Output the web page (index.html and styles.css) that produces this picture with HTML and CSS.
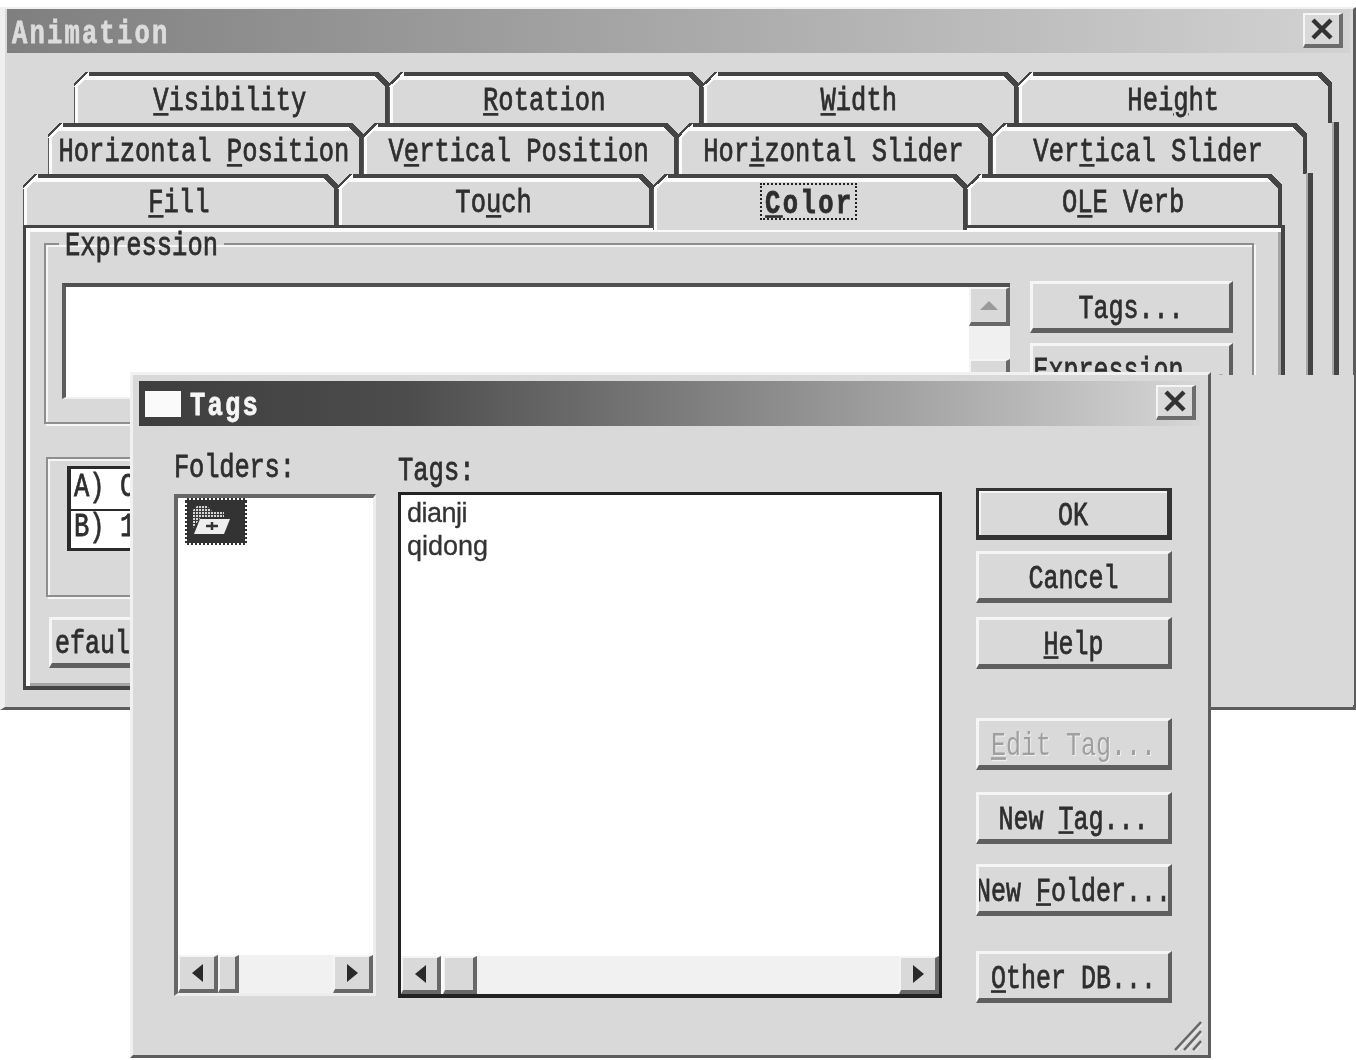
FILE: index.html
```html
<!DOCTYPE html>
<html lang="en">
<head>
<meta charset="utf-8">
<title>Animation</title>
<link rel="stylesheet" href="styles.css">
</head>
<body>
<div class="win win-main">
  <div class="titlebar titlebar-main">
    <span class="title-text title-main"><span class="t">Animation</span></span>
    <button class="close close-main"><svg width="24" height="24" viewBox="0 0 24 24"><path d="M3 3 21 21M21 3 3 21" stroke="#333" stroke-width="4.5"/></svg></button>
  </div>
  <div class="tabs">
    <div class="tabrow row1">
      <div class="tab"><span class="t"><u>V</u>isibility</span></div>
      <div class="tab"><span class="t"><u>R</u>otation</span></div>
      <div class="tab"><span class="t"><u>W</u>idth</span></div>
      <div class="tab"><span class="t">Hei<u>g</u>ht</span></div>
    </div>
    <div class="tabrow row2">
      <div class="tab"><span class="t">Horizontal <u>P</u>osition</span></div>
      <div class="tab"><span class="t">V<u>e</u>rtical Position</span></div>
      <div class="tab"><span class="t">Hor<u>i</u>zontal Slider</span></div>
      <div class="tab"><span class="t">Ver<u>t</u>ical Slider</span></div>
    </div>
    <div class="tabrow row3">
      <div class="tab"><span class="t"><u>F</u>ill</span></div>
      <div class="tab"><span class="t">To<u>u</u>ch</span></div>
      <div class="tab tab-active"><span class="focus"><span class="t"><u>C</u>olor</span></span></div>
      <div class="tab"><span class="t">O<u>L</u>E Verb</span></div>
    </div>
  </div>
  <div class="panel">
    <fieldset class="group group-expr">
      <legend class="legend"><span class="t">Expression</span></legend>
      <div class="expr-row">
        <div class="textarea">
          <div class="vscroll">
            <div class="sbtn sbtn-up"><span class="arrow-up"></span></div>
            <div class="vtrack"></div>
            <div class="sbtn sbtn-low"></div>
          </div>
        </div>
        <div class="expr-btns">
          <button class="btn btn-expr"><span class="t">Tags...</span></button>
          <button class="btn btn-expr"><span class="t">Expression...</span></button>
        </div>
      </div>
    </fieldset>
    <fieldset class="group group-list">
      <div class="abc">
        <div class="abc-row"><span class="t">A) C</span></div>
        <div class="abc-row"><span class="t">B) 1</span></div>
      </div>
    </fieldset>
    <button class="btn btn-default"><span class="t">efault</span></button>
  </div>
  <div class="edge edge1"></div>
  <div class="edge edge2"></div>
  <div class="cover"></div>
</div>

<div class="win win-tags">
  <div class="titlebar titlebar-tags">
    <span class="tag-icon"></span>
    <span class="title-text title-tags"><span class="t">Tags</span></span>
    <button class="close close-tags"><svg width="24" height="24" viewBox="0 0 24 24"><path d="M3 3 21 21M21 3 3 21" stroke="#333" stroke-width="4.5"/></svg></button>
  </div>
  <div class="tags-body">
    <div class="col col-folders">
      <div class="lab lab-folders"><span class="t">Folders:</span></div>
      <div class="list list-folders">
        <div class="list-main">
          <div class="folder-item">
            <svg width="58" height="43" viewBox="0 0 58 43">
              <defs><pattern id="dith" width="3" height="3" patternUnits="userSpaceOnUse"><rect width="3" height="3" fill="#3c3c3c"/><rect width="2" height="2" fill="#d6d6d6"/></pattern></defs>
              <path d="M6 10 10 6H20L26 12H37V17H14L6 28Z" fill="url(#dith)"/>
              <path d="M13 19H43L37 34H7Z" fill="#eee"/>
              <path d="M19 26H31M25 22V30" stroke="#333" stroke-width="2.5"/>
            </svg>
          </div>
        </div>
        <div class="hscroll">
          <div class="sbtn sbtn-h"><span class="arrow-left"></span></div>
          <div class="sbtn thumb-folders"></div>
          <div class="htrack"></div>
          <div class="sbtn sbtn-h"><span class="arrow-right"></span></div>
        </div>
      </div>
    </div>
    <div class="col col-tags">
      <div class="lab lab-tags"><span class="t">Tags:</span></div>
      <div class="list list-tags">
        <div class="list-main tag-items">
          <div class="tag-item">dianji</div>
          <div class="tag-item">qidong</div>
        </div>
        <div class="hscroll">
          <div class="sbtn sbtn-h"><span class="arrow-left"></span></div>
          <div class="sbtn thumb-tags"></div>
          <div class="htrack"></div>
          <div class="sbtn sbtn-h"><span class="arrow-right"></span></div>
        </div>
      </div>
    </div>
    <div class="col col-btns">
      <button class="btn btn-tag btn-ok"><span class="t">OK</span></button>
      <button class="btn btn-tag gap11"><span class="t">Cancel</span></button>
      <button class="btn btn-tag gap14"><span class="t"><u>H</u>elp</span></button>
      <button class="btn btn-tag gap49 btn-disabled"><span class="t"><u>E</u>dit Tag...</span></button>
      <button class="btn btn-tag gap22"><span class="t">New <u>T</u>ag...</span></button>
      <button class="btn btn-tag gap20"><span class="t">New <u>F</u>older...</span></button>
      <button class="btn btn-tag gap35"><span class="t"><u>O</u>ther DB...</span></button>
    </div>
  </div>
  <svg class="grip" width="30" height="32" viewBox="0 0 30 32"><path d="M2 30 28 2M11 30 28 11M20 30 28 21" stroke="#666" stroke-width="2.5"/><path d="M5 31 29 5M14 31 29 14M23 31 29 24" stroke="#f4f4f4" stroke-width="1"/></svg>
</div>
</body>
</html>
```
FILE: styles.css
```css
* { box-sizing: border-box; }
html, body { margin: 0; background: #fff; }
body {
  position: relative;
  width: 1356px;
  height: 1060px;
  overflow: hidden;
  font-family: "Liberation Mono", monospace;
  font-size: 25.5px;
  color: #2e2e2e;
  filter: blur(0.65px);
}
.t { display: inline-block; transform: translateY(2.5px) scaleY(1.32); -webkit-text-stroke: 0.6px #2e2e2e; white-space: pre; }
u { text-decoration-thickness: 2px; text-underline-offset: 2px; }

.win { position: absolute; background: #d9d9d9; }
.win-main {
  left: 0; top: 7px; width: 1356px; height: 703px;
  border-top: 2px solid #f1f1f1;
  border-left: 5px solid #efefef;
  border-right: 3px solid #5c5c5c;
  border-bottom: 3px solid #5c5c5c;
  padding: 0 3px 0 2px;
}
.win-tags {
  left: 130px; top: 372px; width: 1081px; height: 686px;
  border-top: 3px solid #f1f1f1;
  border-left: 3px solid #f1f1f1;
  border-right: 3px solid #5c5c5c;
  border-bottom: 3px solid #5c5c5c;
  padding: 6px 8px 0 6px;
}

.titlebar { display: flex; align-items: center; height: 45px; }
.titlebar-main { height: 44px; background: linear-gradient(90deg, #7f7f7f, #d2d2d2); padding: 0 7px 0 5px; }
.titlebar-tags { background: linear-gradient(90deg, #3e3e3e 0, #4c4c4c 25%, #d6d6d6 100%); padding: 0 4px 0 6px; }
.title-text { font-weight: bold; letter-spacing: 2.2px; }
.title-main { color: #dcdcdc; }
.title-main .t { -webkit-text-stroke: 0.6px #dcdcdc; }
.title-tags { color: #f6f6f6; margin-left: 9px; }
.title-tags .t { -webkit-text-stroke: 0.6px #f6f6f6; }
.tag-icon { width: 36px; height: 26px; background: #fafafa; }
.close {
  margin-left: auto; margin-top: -2px; width: 40px; height: 35px; padding: 0;
  display: flex; align-items: center; justify-content: center;
  background: #d9d9d9;
  border-style: solid; border-width: 2px 4px 4px 2px;
  border-color: #f5f5f5 #6c6c6c #6c6c6c #f5f5f5;
}
.close-tags { margin-top: -3px; }

.tabs { margin-top: 19px; }
.tabrow { display: flex; height: 51px; }
.row1 { padding-left: 67px; width: 1325px; }
.row2 { padding-left: 41px; width: 1300px; }
.row3 { padding-left: 16px; width: 1275px; position: relative; z-index: 2; }
.tab {
  position: relative; flex: 1 1 0; min-width: 0;
  background: #d9d9d9;
  border-top: 4px solid #444;
  border-left: 1px solid #5a5a5a;
  border-right: 4px solid #444;
  box-shadow: inset 3px 4px 0 #fbfbfb;
  text-align: center; line-height: 48px;
  white-space: nowrap;
}
.tab::before, .tab::after { content: ""; position: absolute; top: -4px; width: 15px; height: 15px; }
.tab::before { left: -1px; background: linear-gradient(135deg, #d9d9d9 0 38%, #444 38% 50%, #fbfbfb 50% 62%, transparent 62%); }
.tab::after { right: -4px; background: linear-gradient(225deg, #d9d9d9 0 36%, #444 36% 62%, transparent 62%); }
.tab-active { height: 56px; font-weight: bold; letter-spacing: 2.4px; line-height: 31px; padding-top: 7px; z-index: 2; }
.focus { display: inline-block; outline: 2px dotted #222; padding: 0 1px 0 3px; line-height: 33px; }

.panel {
  margin-left: 16px; width: 1262px; height: 465px;
  border-top: 3px solid #444;
  border-left: 3px solid #444;
  border-right: 4px solid #444;
  border-bottom: 4px solid #444;
  box-shadow: inset 4px 4px 0 #fbfbfb, inset -3px -3px 0 #a4a4a4;
  padding: 1px 0 0 18px;
}
.group {
  margin: 0; min-width: 0; width: 1210px;
  border: 2px solid #8e8e8e;
  box-shadow: inset 2px 2px 0 #f6f6f6, 2px 2px 0 #f6f6f6;
}
.group-expr { padding: 24px 19px 23px 16px; }
.legend { margin-left: -3px; padding: 0 6px; line-height: 30px; height: 30px; }
.legend .t { transform: translateY(3.5px) scaleY(1.32); }
.expr-row { display: flex; gap: 20px; height: 116px; }
.textarea {
  width: 949px; height: 116px; background: #fff; display: flex; justify-content: flex-end;
  border-top: 4px solid #505050; border-left: 4px solid #5c5c5c;
  border-bottom: 2px solid #f1f1f1;
}
.vscroll { width: 41px; display: flex; flex-direction: column; }
.sbtn {
  background: #d9d9d9; display: flex; align-items: center; justify-content: center;
  border-style: solid; border-width: 2px 4px 4px 2px;
  border-color: #f5f5f5 #686868 #686868 #f5f5f5;
}
.sbtn-up { height: 39px; flex: none; }
.vtrack { flex: none; height: 33px; background: #f0f0f0; }
.sbtn-low { height: 40px; flex: none; }
.arrow-up { width: 0; height: 0; border: 9px solid transparent; border-top: 0; border-bottom: 9px solid #9a9a9a; }
.expr-btns { display: flex; flex-direction: column; gap: 10px; margin-top: -2px; }
.btn {
  font: inherit; font-size: 25px; color: inherit; padding: 0; overflow: hidden; white-space: nowrap;
  height: 52px; background: #d9d9d9;
  display: flex; align-items: center; justify-content: center;
  border-style: solid; border-width: 3px 4px 5px 3px;
  border-color: #f5f5f5 #5f5f5f #5f5f5f #f5f5f5;
}
.btn-expr { width: 203px; flex: none; }
.group-list { margin: 33px 0 0 2px; padding: 7px 0 44px 19px; width: 1208px; }
.abc { width: 200px; height: 85px; background: #fff; border: 3px solid #2a2a2a; border-left-width: 4px; }
.abc-row { height: 40px; line-height: 31px; padding-left: 3px; }
.abc-row + .abc-row { border-top: 2px solid #2a2a2a; line-height: 27px; }
.btn-default { width: 200px; height: 51px; margin: 20px 0 0 5px; justify-content: flex-start; padding-left: 3px; }

.edge { position: absolute; width: 5px; background: #444; box-shadow: -2px 0 0 #a8a8a8; }
.edge1 { left: 1329px; top: 113px; height: 253px; }
.edge2 { left: 1303px; top: 164px; height: 202px; }
.cover { position: absolute; left: 1200px; top: 366px; width: 149px; height: 330px; background: #d9d9d9; }

.tags-body { display: flex; padding: 28px 0 0 35px; }
.col { display: flex; flex-direction: column; flex: none; }
.col-folders { width: 202px; }
.col-tags { width: 544px; margin-left: 22px; }
.col-btns { width: 196px; margin-left: 34px; padding-top: 34px; }
.lab { height: 26px; line-height: 26px; }
.lab-folders { margin-bottom: 14px; letter-spacing: -0.2px; }
.lab-tags { margin: 3px 0 9px; }
.list { display: flex; flex-direction: column; background: #fff; }
.list-folders {
  height: 502px;
  border-style: solid; border-width: 4px 3px 3px 4px;
  border-color: #666 #ededed #ededed #666;
}
.list-tags { height: 506px; border: 3px solid #222; border-bottom-width: 4px; }
.list-main { flex: 1 1 0; min-height: 0; }
.tag-items { padding: 2px 0 0 6px; font-family: "Liberation Sans", sans-serif; font-size: 27px; color: #333; }
.tag-item { height: 33px; line-height: 33px; -webkit-text-stroke: 0.3px #333; }
.tag-item:first-child { letter-spacing: -0.5px; }
.folder-item {
  width: 62px; height: 47px; margin-left: 7px; background: #333;
  outline: 2px dotted #fff; outline-offset: -2px; padding: 2px;
}
.folder-item svg { display: block; }
.hscroll { height: 38px; display: flex; flex: none; }
.sbtn-h { width: 40px; flex: none; }
.thumb-folders { width: 21px; flex: none; }
.thumb-tags { width: 34px; flex: none; margin-left: 2px; }
.htrack { flex: 1 1 0; background: #f1f1f1; }
.arrow-left, .arrow-right { width: 0; height: 0; border: 9px solid transparent; }
.arrow-left { border-left: 0; border-right: 11px solid #2a2a2a; }
.arrow-right { border-right: 0; border-left: 11px solid #2a2a2a; }
.btn-tag { width: 196px; flex: none; }
.btn-ok { border: 3px solid #333; border-bottom-width: 5px; border-right-width: 5px; box-shadow: inset 2px 2px 0 #f5f5f5; }
.gap11 { margin-top: 11px; }
.gap14 { margin-top: 14px; }
.gap49 { margin-top: 49px; }
.gap22 { margin-top: 22px; }
.gap20 { margin-top: 20px; }
.gap35 { margin-top: 35px; }
.btn-disabled { color: #9f9f9f; }
.btn-disabled .t { -webkit-text-stroke: 0; text-shadow: 1px 1px 0 #f0f0f0; }
.grip { position: absolute; right: 5px; bottom: 3px; }
```
